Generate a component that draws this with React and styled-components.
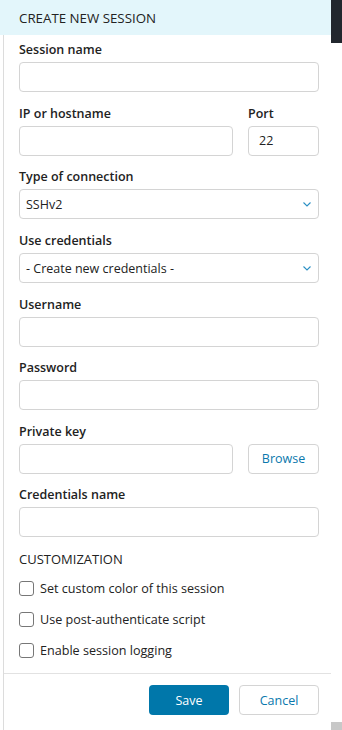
import React from 'react'
import styled, { createGlobalStyle } from 'styled-components'

const GlobalStyle = createGlobalStyle`
  html, body {
    margin: 0;
    padding: 0;
    background: #fff;
  }
  body {
    font-family: "Open Sans", "Noto Sans", sans-serif;
    color: #222;
  }
  * { box-sizing: border-box; }
`

const Page = styled.div`
  display: flex;
  width: 342px;
  height: 730px;
  overflow: hidden;
`

const Panel = styled.div`
  width: 331px;
  display: flex;
  flex-direction: column;
`

const Header = styled.div`
  height: 36px;
  background: #e3f6fb;
  padding-left: 19px;
  display: flex;
  align-items: center;
  font-size: 13.3px;
  color: #222;
`

const Body = styled.div`
  flex: 1;
  margin-left: 3px;
  border-left: 1px solid #dcdcdc;
  display: flex;
  flex-direction: column;
`

const Form = styled.div`
  padding: 6px 12px 0 15px;
`

const Field = styled.div`
  margin-bottom: 12.6px;
  display: flex;
  flex-direction: column;
  flex: ${p => p.$grow ? 1 : 'none'};
  width: ${p => p.$w || 'auto'};
`

const Row = styled.div`
  display: flex;
  gap: 15px;
`

const Label = styled.label`
  font-size: 12.5px;
  font-weight: 600;
  line-height: 18px;
  margin-bottom: 3px;
  color: #222;
`

const Input = styled.input`
  height: 30px;
  width: 100%;
  border: 1px solid #d4d4d4;
  border-radius: 4px;
  padding: 0 ${p => p.$pad || 6}px;
  font-family: inherit;
  font-size: 12.5px;
  color: #222;
  outline: none;
  background: #fff;
`

const SelectBox = styled.div`
  position: relative;
  height: 30px;
  border: 1px solid #d4d4d4;
  border-radius: 4px;
  padding: 0 6px;
  display: flex;
  align-items: center;
  font-size: 12.5px;
  color: #222;
`

const Chevron = styled.svg`
  position: absolute;
  right: 7px;
  top: 12px;
`

const GhostButton = styled.button`
  height: 30px;
  width: ${p => p.$w || 70}px;
  border: 1px solid #d4d4d4;
  border-radius: 4px;
  background: #fff;
  color: #0a78ad;
  font-family: inherit;
  font-size: 12.5px;
  cursor: pointer;
`

const PrimaryButton = styled.button`
  height: 30px;
  width: 80px;
  border: none;
  border-radius: 4px;
  background: #0077aa;
  color: #fff;
  font-family: inherit;
  font-size: 12.5px;
  cursor: pointer;
`

const Section = styled.div`
  font-size: 13px;
  line-height: 18px;
  margin: 1px 0 12px;
  color: #222;
`

const CheckRow = styled.label`
  display: flex;
  align-items: center;
  gap: 6px;
  height: 16px;
  margin-bottom: 15px;
  font-size: 12.6px;
  color: #222;
`

const Box = styled.span`
  width: 15px;
  height: 15px;
  border: 1.5px solid #777;
  border-radius: 3px;
  flex: none;
`

const Footer = styled.div`
  margin-top: auto;
  border-top: 1px solid #e2e2e2;
  height: 57px;
  display: flex;
  justify-content: flex-end;
  gap: 10px;
  padding: 11px 12px 0 0;
`

const Rail = styled.div`
  width: 11px;
  display: flex;
  flex-direction: column;
  justify-content: space-between;
`

const Thumb = styled.div`
  height: 43px;
  background: #22272e;
`

const Corner = styled.div`
  height: 8px;
  background: #c8c8c8;
`

const Select = ({ value }) => (
  <SelectBox>
    {value}
    <Chevron width="8" height="5" viewBox="0 0 8 5">
      <path d="M0.5 0.5 L4 4 L7.5 0.5" fill="none" stroke="#2a8fc4" strokeWidth="1.1" />
    </Chevron>
  </SelectBox>
)

const checks = [
  'Set custom color of this session',
  'Use post-authenticate script',
  'Enable session logging',
]

export default function App() {
  return (
    <Page>
      <GlobalStyle />
      <Panel>
        <Header>CREATE NEW SESSION</Header>
        <Body>
          <Form>
            <Field>
              <Label>Session name</Label>
              <Input />
            </Field>
            <Row>
              <Field $grow>
                <Label>IP or hostname</Label>
                <Input />
              </Field>
              <Field $w="71px">
                <Label>Port</Label>
                <Input defaultValue="22" $pad={10} />
              </Field>
            </Row>
            <Field>
              <Label>Type of connection</Label>
              <Select value="SSHv2" />
            </Field>
            <Field>
              <Label>Use credentials</Label>
              <Select value="- Create new credentials -" />
            </Field>
            <Field>
              <Label>Username</Label>
              <Input />
            </Field>
            <Field>
              <Label>Password</Label>
              <Input type="password" />
            </Field>
            <Row>
              <Field $grow>
                <Label>Private key</Label>
                <Input />
              </Field>
              <Field $w="71px">
                <Label>&nbsp;</Label>
                <GhostButton $w={71}>Browse</GhostButton>
              </Field>
            </Row>
            <Field>
              <Label>Credentials name</Label>
              <Input />
            </Field>
            <Section>CUSTOMIZATION</Section>
            {checks.map(c => (
              <CheckRow key={c}>
                <Box />
                {c}
              </CheckRow>
            ))}
          </Form>
          <Footer>
            <PrimaryButton>Save</PrimaryButton>
            <GhostButton $w={80}>Cancel</GhostButton>
          </Footer>
        </Body>
      </Panel>
      <Rail>
        <Thumb />
        <Corner />
      </Rail>
    </Page>
  )
}
